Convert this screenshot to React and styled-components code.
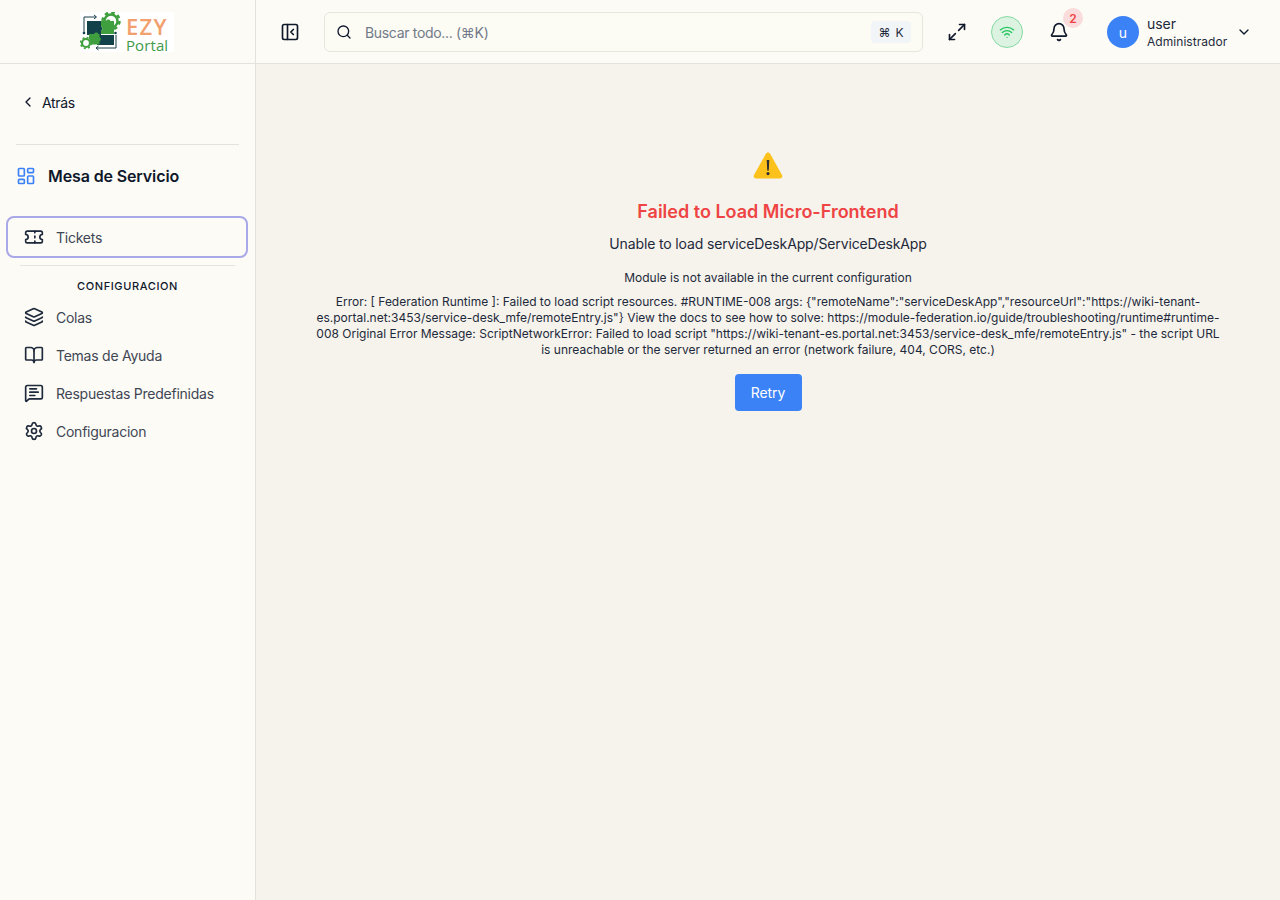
import React from "react";
import styled, { createGlobalStyle } from "styled-components";
import {
  PanelLeftClose, Search, Maximize2, Wifi, Bell, ChevronDown, ChevronLeft,
  LayoutDashboard, Ticket, Layers, BookOpen, MessageSquareText, Settings,
} from "lucide-react";

const Global = createGlobalStyle`
  html, body { margin: 0; padding: 0; background: #f5f3ec; }
  body { font-family: Inter, "Liberation Sans", sans-serif; color: #0f172a; }
  * { box-sizing: border-box; }
`;

const Shell = styled.div`
  display: grid;
  grid-template-columns: 256px 1fr;
  grid-template-rows: 64px 1fr;
  width: 1280px;
  height: 900px;
  overflow: hidden;
`;

const Brand = styled.div`
  display: flex;
  align-items: center;
  justify-content: center;
  padding-top: 1px;
  background: #fcfbf6;
  border-right: 1px solid #e4e2da;
  border-bottom: 1px solid #e4e2da;
`;

const LogoBox = styled.div`
  display: flex;
  align-items: center;
  width: 94px;
  height: 40px;
  margin-left: -1px;
  background: #fff;
`;

const LogoWords = styled.div`
  display: flex;
  flex-direction: column;
  margin-left: 2px;
  padding-top: 4px;
  font-family: "Open Sans", sans-serif;
`;

const LogoEzy = styled.span`
  font-size: 22px;
  line-height: 21px;
  font-weight: 600;
  letter-spacing: 1.3px;
  color: #f2a06e;
`;

const LogoPortal = styled.span`
  font-size: 15px;
  line-height: 16px;
  font-weight: 400;
  letter-spacing: 0.1px;
  color: #3f9a4a;
`;

const TopBar = styled.header`
  display: flex;
  align-items: center;
  padding: 1px 0 0 24px;
  background: #fcfbf6;
  border-bottom: 1px solid #e4e2da;
`;

const IconBtn = styled.div`
  display: flex;
  align-items: center;
  justify-content: center;
  width: 20px;
  height: 20px;
  flex: none;
  color: #0f172a;
`;

const SearchBox = styled.div`
  display: flex;
  align-items: center;
  width: 599px;
  height: 40px;
  margin-left: 24px;
  padding: 0 11px;
  border: 1px solid #e8e6dc;
  border-radius: 6px;
  background: #fcfbf4;
`;

const SearchText = styled.span`
  flex: 1;
  margin-left: 13px;
  font-size: 14px;
  letter-spacing: -0.32px;
  color: #717a88;
`;

const Kbd = styled.span`
  display: flex;
  align-items: center;
  justify-content: center;
  gap: 5px;
  width: 40px;
  height: 22px;
  font-size: 12px;
  color: #1e293b;
  background: #f2f5f8;
  border-radius: 4px;
`;

const Expand = styled(IconBtn)`
  margin-left: 24px;
`;

const Signal = styled.div`
  display: flex;
  align-items: center;
  justify-content: center;
  width: 32px;
  height: 32px;
  margin-left: 24px;
  border-radius: 50%;
  color: #22c55e;
  background: #dcf3e2;
  border: 1px solid #86dba4;
`;

const BellWrap = styled.div`
  position: relative;
  display: flex;
  width: 20px;
  height: 20px;
  margin-left: 26px;
  color: #0f172a;
`;

const Badge = styled.span`
  position: absolute;
  top: -14px;
  left: 14px;
  display: flex;
  align-items: center;
  justify-content: center;
  width: 20px;
  height: 20px;
  border-radius: 50%;
  font-size: 12px;
  font-weight: 600;
  color: #ef4444;
  background: #fbdcdc;
`;

const UserBlock = styled.div`
  display: flex;
  align-items: center;
  margin-left: 38px;
`;

const Avatar = styled.div`
  display: flex;
  align-items: center;
  justify-content: center;
  width: 32px;
  height: 32px;
  border-radius: 50%;
  font-size: 14px;
  color: #fff;
  background: #3b82f6;
`;

const UserText = styled.div`
  display: flex;
  flex-direction: column;
  margin-left: 8px;
  margin-right: 9px;
`;

const UserName = styled.span`
  font-size: 14px;
  line-height: 18px;
  letter-spacing: -0.05px;
  color: #1e293b;
`;

const UserRole = styled.span`
  margin-top: 1px;
  font-size: 12px;
  line-height: 16px;
  letter-spacing: 0.05px;
  color: #1e293b;
`;

const Side = styled.aside`
  display: flex;
  flex-direction: column;
  background: #fcfbf6;
  border-right: 1px solid #e4e2da;
`;

const Back = styled.div`
  display: flex;
  align-items: center;
  gap: 6px;
  height: 20px;
  margin: 28px 0 0 20px;
  font-size: 14px;
  letter-spacing: -0.35px;
  color: #0f172a;
`;

const Divider = styled.div`
  height: 1px;
  margin: 32px 16px 0;
  background: #e4e2da;
`;

const SectionHead = styled.div`
  display: flex;
  align-items: center;
  gap: 12px;
  height: 24px;
  margin: 19px 0 0 16px;
  font-size: 16px;
  font-weight: 600;
  letter-spacing: -0.12px;
  color: #0f172a;
`;

const NavItem = styled.div`
  display: flex;
  align-items: center;
  gap: 12px;
  height: ${(p) => (p.$focus ? "42px" : "38px")};
  padding-left: ${(p) => (p.$focus ? "16px" : "24px")};
  margin: ${(p) => (p.$focus ? "28px 7px 0 6px" : "0")};
  font-size: 14px;
  letter-spacing: -0.25px;
  color: #3f4654;
  border: ${(p) => (p.$focus ? "2px solid #a9a8e8" : "none")};
  border-radius: 8px;
  svg { color: #1e293b; flex: none; }
`;

const ThinRule = styled.div`
  height: 1px;
  margin: 7px 20px 0;
  background: #e6e4dc;
`;

const GroupLabel = styled.div`
  height: 20px;
  margin-top: 10px;
  margin-bottom: 2px;
  font-size: 11px;
  line-height: 20px;
  font-weight: 500;
  letter-spacing: 0.62px;
  text-align: center;
  color: #0f172a;
`;

const Main = styled.main`
  display: flex;
  flex-direction: column;
  align-items: center;
  padding: 87px 56px 0;
  background: #f5f3ec;
  text-align: center;
`;

const Warn = styled.svg`
  display: block;
  width: 30px;
  height: 28px;
`;

const Title = styled.h2`
  margin: 19px 0 0;
  font-size: 18px;
  line-height: 28px;
  font-weight: 600;
  color: #ef4444;
`;

const Subtitle = styled.p`
  margin: 8px 0 0;
  font-size: 14px;
  line-height: 20px;
  letter-spacing: -0.14px;
  color: #1e293b;
`;

const Detail = styled.p`
  margin: 16px 0 0;
  font-size: 12px;
  line-height: 16px;
  color: #1e293b;
`;

const ErrorText = styled.p`
  margin: 8px 0 0;
  width: 912px;
  font-size: 12px;
  line-height: 16px;
  color: #1e293b;
`;

const Retry = styled.button`
  width: 67px;
  height: 37px;
  margin-top: 16px;
  border: 0;
  border-radius: 4px;
  font: inherit;
  font-size: 14px;
  letter-spacing: -0.1px;
  color: #fff;
  background: #3b82f6;
`;

const ERROR_MESSAGE =
  'Error: [ Federation Runtime ]: Failed to load script resources. #RUNTIME-008 args: {"remoteName":"serviceDeskApp","resourceUrl":"https://wiki-tenant-es.portal.net:3453/service-desk_mfe/remoteEntry.js"} View the docs to see how to solve: https://module-federation.io/guide/troubleshooting/runtime#runtime-008 Original Error Message: ScriptNetworkError: Failed to load script "https://wiki-tenant-es.portal.net:3453/service-desk_mfe/remoteEntry.js" - the script URL is unreachable or the server returned an error (network failure, 404, CORS, etc.)';

const Logo = () => (
  <svg width="44" height="40" viewBox="0 0 44 40" fill="none">
    <path d="M4 20V5H16M14 3l2.500 2-2.500 2" stroke="#1c3f48" strokeWidth="1" />
    <path d="M16 36H36V23M18.500 34l-2.500 2 2.500 2" stroke="#1c3f48" strokeWidth="1" />
    <circle cx="4" cy="21" r="1.300" fill="#12414a" />
    <circle cx="35.500" cy="21" r="1.300" fill="#12414a" />
    <circle cx="31" cy="9" r="6.500" stroke="#3f9f3f" strokeWidth="2.500" />
    <circle cx="31" cy="9" r="8.500" stroke="#3f9f3f" strokeWidth="2.500" strokeDasharray="3.500 3.170" />
    <path d="M7 9h14v5.500a2.500 2.500 0 0 1 0 4.500v4h-14z" fill="#12414a" />
    <path d="M21 9h5a2.500 2.500 0 0 1 4.500 0h3.500v13h-13v-3a2.500 2.500 0 0 0 0-4.500z" fill="#3f9f3f" />
    <path d="M17 23h17v10h-17z" fill="#12414a" />
    <path d="M9 22h5a2.500 2.500 0 0 1 4.500 0h1v3a2.500 2.500 0 0 1 0 4.500v3h-10.500z" fill="#3f9f3f" />
    <circle cx="6" cy="31" r="4" stroke="#fff" strokeWidth="2" />
    <circle cx="6" cy="31" r="4" stroke="#3f9f3f" strokeWidth="2.200" />
    <circle cx="6" cy="31" r="5.500" stroke="#3f9f3f" strokeWidth="1.500" strokeDasharray="2 2.320" />
  </svg>
);

export default function App() {
  return (
    <Shell>
      <Global />
      <Brand>
        <LogoBox>
          <Logo />
          <LogoWords>
            <LogoEzy>EZY</LogoEzy>
            <LogoPortal>Portal</LogoPortal>
          </LogoWords>
        </LogoBox>
      </Brand>
      <TopBar>
        <IconBtn><PanelLeftClose size={20} /></IconBtn>
        <SearchBox>
          <Search size={16} color="#0f172a" />
          <SearchText>Buscar todo... (⌘K)</SearchText>
          <Kbd><span>⌘</span><span>K</span></Kbd>
        </SearchBox>
        <Expand><Maximize2 size={20} /></Expand>
        <Signal><Wifi size={16} /></Signal>
        <BellWrap>
          <Bell size={20} />
          <Badge>2</Badge>
        </BellWrap>
        <UserBlock>
          <Avatar>u</Avatar>
          <UserText>
            <UserName>user</UserName>
            <UserRole>Administrador</UserRole>
          </UserText>
          <ChevronDown size={16} color="#0f172a" />
        </UserBlock>
      </TopBar>
      <Side>
        <Back><ChevronLeft size={16} />Atrás</Back>
        <Divider />
        <SectionHead><LayoutDashboard size={20} color="#3b82f6" />Mesa de Servicio</SectionHead>
        <NavItem $focus><Ticket size={20} />Tickets</NavItem>
        <ThinRule />
        <GroupLabel>CONFIGURACION</GroupLabel>
        <NavItem><Layers size={20} />Colas</NavItem>
        <NavItem><BookOpen size={20} />Temas de Ayuda</NavItem>
        <NavItem><MessageSquareText size={20} />Respuestas Predefinidas</NavItem>
        <NavItem><Settings size={20} />Configuracion</NavItem>
      </Side>
      <Main>
        <Warn viewBox="0 0 30 28">
          <path d="M15 1.500c-1 0-1.700.5-2.300 1.500L1 24c-.9 1.700.2 3.500 2 3.500h24c1.800 0 2.900-1.800 2-3.500L17.300 3c-.6-1-1.300-1.500-2.300-1.500z" fill="#fcc21b" />
          <path d="M13.700 9h2.600l-.5 10.500h-1.600zM15 21a1.600 1.600 0 1 1 0 3.200 1.600 1.600 0 0 1 0-3.200z" fill="#2f2f2f" />
        </Warn>
        <Title>Failed to Load Micro-Frontend</Title>
        <Subtitle>Unable to load serviceDeskApp/ServiceDeskApp</Subtitle>
        <Detail>Module is not available in the current configuration</Detail>
        <ErrorText>{ERROR_MESSAGE}</ErrorText>
        <Retry>Retry</Retry>
      </Main>
    </Shell>
  );
}
